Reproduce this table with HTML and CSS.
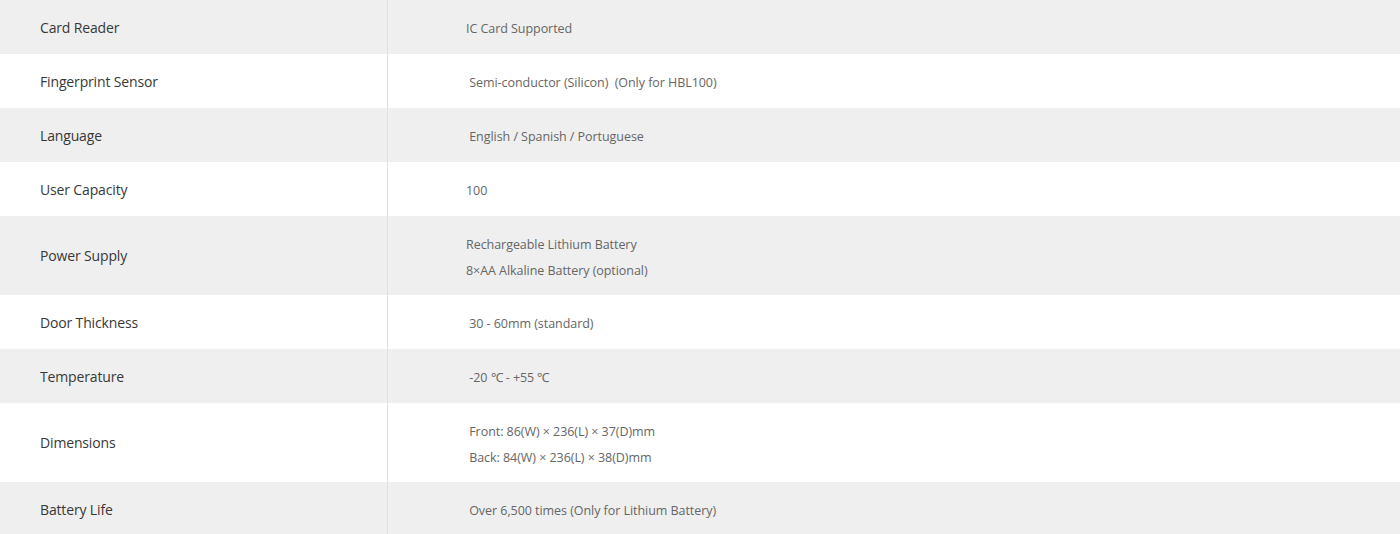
FILE: index.html
```html
<!DOCTYPE html>
<html lang="en">
<head>
<meta charset="utf-8">
<title>Specifications</title>
<link rel="stylesheet" href="styles.css">
</head>
<body>
<div class="spec">
  <div class="row shade">
    <div class="label">Card Reader</div>
    <div class="value">IC Card Supported</div>
  </div>
  <div class="row">
    <div class="label">Fingerprint Sensor</div>
    <div class="value">&nbsp;Semi-conductor (Silicon) &nbsp;(Only for HBL100)</div>
  </div>
  <div class="row shade">
    <div class="label">Language</div>
    <div class="value">&nbsp;English / Spanish / Portuguese</div>
  </div>
  <div class="row">
    <div class="label">User Capacity</div>
    <div class="value">100</div>
  </div>
  <div class="row shade">
    <div class="label">Power Supply</div>
    <div class="value">Rechargeable Lithium Battery<br>8×AA Alkaline Battery (optional)</div>
  </div>
  <div class="row">
    <div class="label">Door Thickness</div>
    <div class="value">&nbsp;30 - 60mm (standard)</div>
  </div>
  <div class="row shade">
    <div class="label">Temperature</div>
    <div class="value">&nbsp;-20 ℃ - +55 ℃</div>
  </div>
  <div class="row">
    <div class="label">Dimensions</div>
    <div class="value">&nbsp;Front: 86(W) × 236(L) × 37(D)mm<br>&nbsp;Back: 84(W) × 236(L) × 38(D)mm</div>
  </div>
  <div class="row shade">
    <div class="label">Battery Life</div>
    <div class="value">&nbsp;Over 6,500 times (Only for Lithium Battery)</div>
  </div>
</div>
</body>
</html>
```

FILE: styles.css
```css
html, body {
  margin: 0;
  padding: 0;
  background: #ffffff;
}

.spec {
  display: flex;
  flex-direction: column;
  font-family: "Open Sans", "Liberation Sans", sans-serif;
}

.row {
  display: grid;
  grid-template-columns: 388px 1fr;
  min-height: 54px;
  background: #ffffff;
}

.row.shade {
  background: #efefef;
}

.label {
  display: flex;
  align-items: center;
  padding-left: 40px;
  padding-top: 1px;
  font-size: 14px;
  line-height: 20px;
  letter-spacing: -0.15px;
  color: #383838;
  border-right: 1px solid #e0e0e0;
}

.value {
  padding: 16px 0 11px 78px;
  font-size: 12.5px;
  line-height: 26px;
  letter-spacing: -0.05px;
  color: #666666;
}
```
